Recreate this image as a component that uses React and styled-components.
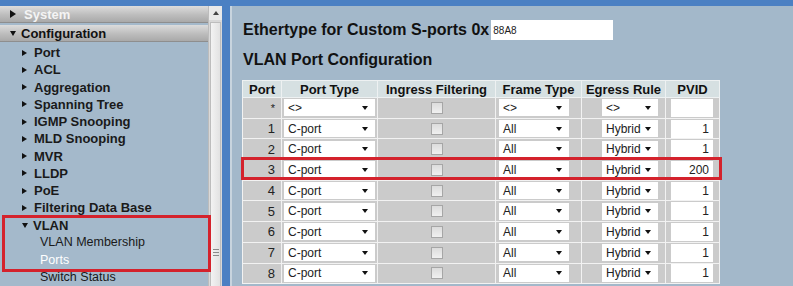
import React from "react";
import styled, { createGlobalStyle } from "styled-components";

const Global = createGlobalStyle`
  html, body {
    margin: 0;
    padding: 0;
    overflow: hidden;
    background: #4b80c3;
    font-family: "Liberation Sans", Arial, sans-serif;
  }
`;

const Page = styled.div`
  display: flex;
  height: 286px;
  padding-top: 6px;
  box-sizing: border-box;
  overflow: hidden;
`;

const Side = styled.div`
  display: flex;
  width: 222px;
  flex-shrink: 0;
`;

const Menu = styled.div`
  width: 208px;
  background: #a4b9cb;
  position: relative;
`;

const Head = styled.div`
  display: flex;
  align-items: center;
  height: ${(p) => p.h}px;
  margin-bottom: 2px;
  padding-left: 10px;
  background: linear-gradient(#dcdcdc, #bdbdbd 55%, #a9a9a9);
  border-bottom: 1px solid #8e8e8e;
  color: ${(p) => (p.light ? "#f4f4f4" : "#111")};
  font-size: 13px;
  font-weight: bold;
`;

const Arrow = styled.span`
  display: inline-block;
  width: 0;
  height: 0;
  margin-right: ${(p) => p.gap}px;
  ${(p) =>
    p.down
      ? `border-left: ${p.s}px solid transparent; border-right: ${p.s}px solid transparent; border-top: ${p.s * 1.5}px solid #111;`
      : `border-top: ${p.s}px solid transparent; border-bottom: ${p.s}px solid transparent; border-left: ${p.s * 1.5}px solid ${p.c || "#111"};`}
`;

const Item = styled.div`
  display: flex;
  align-items: center;
  height: 17.25px;
  padding-left: ${(p) => (p.sub ? 40 : 22)}px;
  font-size: ${(p) => (p.sub ? 12.5 : 13)}px;
  font-weight: ${(p) => (p.sub ? "normal" : "bold")};
  color: ${(p) => (p.active ? "#ffffff" : "#1a1a1a")};
  white-space: nowrap;
`;

const SideMark = styled.div`
  position: absolute;
  left: 2px;
  top: 209px;
  width: 203px;
  height: 51px;
  border: 3px solid #d4222c;
  pointer-events: none;
`;

const Scroll = styled.div`
  width: 14px;
  background: #d8d8d8;
  border-left: 1px solid #bcbcbc;
  display: flex;
  flex-direction: column;
  box-sizing: border-box;
`;

const ScrollBtn = styled.div`
  height: 14px;
  display: flex;
  align-items: center;
  justify-content: center;
  background: #e9e9e9;
`;

const Thumb = styled.div`
  flex: 1;
  margin: 2px 1px 0 1px;
  background: linear-gradient(90deg, #f3f3f3, #e2e2e2);
  border: 1px solid #bdbdbd;
  border-bottom: none;
  display: flex;
  flex-direction: column;
  align-items: center;
  padding-top: 226px;
  gap: 2px;
`;

const Grip = styled.div`
  width: 6px;
  height: 1px;
  background: #8a8a8a;
`;

const Main = styled.div`
  flex: 1;
  margin-left: 8px;
  background: #a3b8ca;
  border-left: 2px solid #c8d4de;
  padding: 14px 0 0 11px;
`;

const Title = styled.div`
  display: flex;
  align-items: center;
  font-size: 16px;
  font-weight: bold;
  color: #111;
  height: 20px;
  margin-bottom: ${(p) => p.mb || 0}px;
`;

const TextBox = styled.div`
  width: 122px;
  height: 20px;
  margin-left: 2px;
  background: #fff;
  font-size: 10px;
  font-weight: normal;
  display: flex;
  align-items: center;
  padding-left: 2px;
  box-sizing: border-box;
  color: #222;
`;

const Table = styled.table`
  border-collapse: collapse;
  table-layout: fixed;
  margin-left: -1px;
`;

const Th = styled.th`
  width: ${(p) => p.w}px;
  height: 16px;
  padding: 0;
  background: #d6e0e2;
  border: 1px solid #eef1f2;
  font-size: 13px;
  font-weight: bold;
  color: #111;
  text-align: center;
  white-space: nowrap;
`;

const Td = styled.td`
  height: 19.7px;
  padding: 0 ${(p) => p.pr || 0}px 0 ${(p) => p.pl || 0}px;
  background: #cbcbcb;
  border: 1px solid #f2f2f2;
  text-align: ${(p) => p.align || "left"};
  font-size: 13px;
  color: #222;
  vertical-align: middle;
`;

const Drop = styled.div`
  display: flex;
  align-items: center;
  justify-content: space-between;
  width: ${(p) => p.w}px;
  height: 17px;
  background: #fff;
  box-sizing: border-box;
  padding: 0 7px 0 4px;
  font-size: 12px;
  color: #222;
  margin-left: ${(p) => p.ml || 0}px;
`;

const Caret = styled.span`
  width: 0;
  height: 0;
  border-left: 3.5px solid transparent;
  border-right: 3.5px solid transparent;
  border-top: 4px solid #111;
`;

const Check = styled.div`
  width: 10px;
  height: 10px;
  margin: 0 auto;
  border: 1px solid #a6a6a6;
  background: linear-gradient(#dcdcdc, #f0f0f0);
`;

const NumBox = styled.div`
  width: 42px;
  height: 18px;
  margin-left: 5px;
  background: #fff;
  font-size: 12px;
  color: #222;
  display: flex;
  align-items: center;
  justify-content: flex-end;
  padding-right: 4px;
  box-sizing: border-box;
`;

const RowMark = styled.div`
  position: absolute;
  left: 241px;
  top: 157px;
  width: 475px;
  height: 17px;
  border: 3px solid #d4222c;
  pointer-events: none;
`;

const menu = [
  "Port",
  "ACL",
  "Aggregation",
  "Spanning Tree",
  "IGMP Snooping",
  "MLD Snooping",
  "MVR",
  "LLDP",
  "PoE",
  "Filtering Data Base",
];

const rows = [
  { port: "*", type: "<>", frame: "<>", egress: "<>", pvid: "" },
  ...[1, 2, 3, 4, 5, 6, 7, 8].map((n) => ({
    port: String(n),
    type: "C-port",
    frame: "All",
    egress: "Hybrid",
    pvid: n === 3 ? "200" : "1",
  })),
];

export default function App() {
  return (
    <>
      <Global />
      <Page>
        <Side>
          <Menu>
            <Head h={16} light>
              <Arrow s={4.5} gap={8} c="#111" />
              System
            </Head>
            <Head h={16}>
              <Arrow down s={3.5} gap={5} />
              Configuration
            </Head>
            {menu.map((m) => (
              <Item key={m}>
                <Arrow s={3.5} gap={7} />
                {m}
              </Item>
            ))}
            <Item>
              <Arrow down s={3.5} gap={5} />
              VLAN
            </Item>
            <Item sub>VLAN Membership</Item>
            <Item sub active>
              Ports
            </Item>
            <Item sub>Switch Status</Item>
            <SideMark />
          </Menu>
          <Scroll>
            <ScrollBtn>
              <Caret style={{ transform: "rotate(180deg)", borderTopColor: "#444" }} />
            </ScrollBtn>
            <Thumb>
              <Grip />
              <Grip />
              <Grip />
            </Thumb>
          </Scroll>
        </Side>
        <Main>
          <Title mb={10}>
            Ethertype for Custom S-ports 0x
            <TextBox>88A8</TextBox>
          </Title>
          <Title mb={10}>VLAN Port Configuration</Title>
          <Table>
            <thead>
              <tr>
                <Th w={38}>Port</Th>
                <Th w={95}>Port Type</Th>
                <Th w={117}>Ingress Filtering</Th>
                <Th w={85}>Frame Type</Th>
                <Th w={83}>Egress Rule</Th>
                <Th w={53}>PVID</Th>
              </tr>
            </thead>
            <tbody>
              {rows.map((r) => (
                <tr key={r.port}>
                  <Td align="right" pr={6}>
                    <span style={r.port === "*" ? { fontSize: 11 } : null}>{r.port}</span>
                  </Td>
                  <Td>
                    <Drop w={91} ml={2}>
                      {r.type}
                      <Caret />
                    </Drop>
                  </Td>
                  <Td>
                    <Check />
                  </Td>
                  <Td>
                    <Drop w={70} ml={3}>
                      {r.frame}
                      <Caret />
                    </Drop>
                  </Td>
                  <Td>
                    <Drop w={56} ml={20}>
                      {r.egress}
                      <Caret />
                    </Drop>
                  </Td>
                  <Td>
                    <NumBox>{r.pvid}</NumBox>
                  </Td>
                </tr>
              ))}
            </tbody>
          </Table>
        </Main>
      </Page>
      <RowMark />
    </>
  );
}
